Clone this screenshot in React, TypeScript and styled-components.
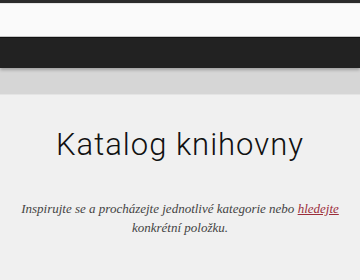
import React from 'react';
import styled, { createGlobalStyle } from 'styled-components';

const GlobalStyle = createGlobalStyle`
  html, body {
    margin: 0;
    padding: 0;
    background: #f0f0f0;
  }
`;

const Page = styled.div`
  display: flex;
  flex-direction: column;
  width: 360px;
  min-height: 280px;
  background: #f0f0f0;
`;

const TopStrip = styled.div`
  height: 3px;
  background: #2b2b2b;
`;

const HeaderBar = styled.div`
  height: 32px;
  background: #fafafa;
  border-top: 1px solid #e6e6e6;
  border-bottom: 1px solid #c8c8c8;
`;

const NavBar = styled.div`
  height: 30px;
  background: #222222;
  border-top: 1px solid #111111;
  box-shadow: 0 2px 3px rgba(0, 0, 0, 0.25);
  position: relative;
  z-index: 1;
`;

const SubBar = styled.div`
  height: 26px;
  background: #d6d6d6;
  border-bottom: 1px solid #e4e4e4;
`;

const Intro = styled.section`
  display: flex;
  flex-direction: column;
  align-items: center;
  padding: 32px 12px 0;
`;

const Title = styled.h1`
  margin: 0;
  font-family: Roboto, "Noto Sans", sans-serif;
  font-weight: 300;
  font-size: 31px;
  letter-spacing: 1px;
  line-height: 36px;
  color: #111;
`;

const Lead = styled.p`
  margin: 36px 0 0;
  font-family: "Liberation Serif", "DejaVu Serif", serif;
  font-style: italic;
  font-size: 13px;
  line-height: 19px;
  color: #444;
  text-align: center;
`;

const Link = styled.a`
  color: #9b2d3a;
  text-decoration: underline;
`;

const App: React.FC = () => {
  return (
    <Page>
      <GlobalStyle />
      <TopStrip />
      <HeaderBar />
      <NavBar />
      <SubBar />
      <Intro>
        <Title>Katalog knihovny</Title>
        <Lead>
          Inspirujte se a procházejte jednotlivé kategorie nebo <Link href="#">hledejte</Link> konkrétní položku.
        </Lead>
      </Intro>
    </Page>
  );
};

export default App;
